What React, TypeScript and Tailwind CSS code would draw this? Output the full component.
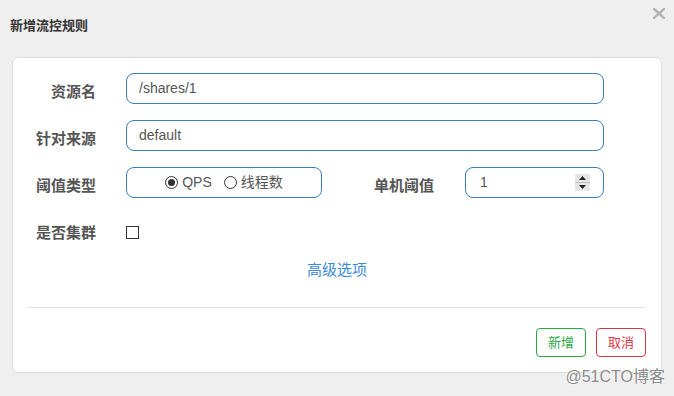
import React from 'react';

const font = { fontFamily: '"Liberation Sans", "Noto Sans CJK SC", sans-serif' };

function Label({ text, className = '' }: { text: string; className?: string }) {
  return (
    <div className={`h-[31px] w-[83px] shrink-0 text-right text-[15px] font-bold text-[#555] leading-[31px] ${className}`}>
      {text}
    </div>
  );
}

function Radio({ checked, label }: { checked: boolean; label: string }) {
  return (
    <label className="flex items-center gap-[4px]">
      <span className="flex h-[13px] w-[13px] items-center justify-center rounded-full border border-[#333] bg-white">
        {checked && <span className="h-[7px] w-[7px] rounded-full bg-[#333]" />}
      </span>
      <span className="text-[14px] text-[#555]">{label}</span>
    </label>
  );
}

function Spinner() {
  return (
    <div className="flex h-[17px] w-[15px] flex-col bg-[#e6e6e6]">
      <div className="flex flex-1 items-center justify-center border-b border-[#bbb]">
        <svg width="7" height="4" viewBox="0 0 7 4">
          <path d="M0 4 L3.5 0 L7 4 Z" fill="#222" />
        </svg>
      </div>
      <div className="flex flex-1 items-center justify-center">
        <svg width="7" height="4" viewBox="0 0 7 4">
          <path d="M0 0 L3.5 4 L7 0 Z" fill="#222" />
        </svg>
      </div>
    </div>
  );
}

export default function App() {
  return (
    <div className="relative h-[396px] w-[674px] overflow-hidden bg-[#efefef]" style={font}>
      {/* header */}
      <div className="h-[57px] pl-[10px] pt-[16px]">
        <h4 className="text-[13px] font-bold leading-[19px] text-[#333]">新增流控规则</h4>
      </div>
      <button className="absolute right-[9px] top-[8px]">
        <svg width="12" height="11" viewBox="0 0 12 11">
          <path d="M1 1 L11 10 M11 1 L1 10" stroke="#b3b3b3" strokeWidth="2.4" strokeLinecap="square" />
        </svg>
      </button>

      {/* card */}
      <div className="mx-3 h-[316px] rounded-[6px] border border-[#dcdcdc] bg-white pt-[15px]">
        <div className="flex flex-col gap-[16px]">
          <div className="flex items-center gap-[30px]">
            <Label text="资源名" className="pt-[3px]" />
            <div className="flex h-[31px] w-[478px] items-center rounded-[8px] border border-[#3a7dc0] px-[12px] text-[14px] text-[#555]">
              /shares/1
            </div>
          </div>
          <div className="flex items-center gap-[30px]">
            <Label text="针对来源" className="pt-[3px]" />
            <div className="flex h-[31px] w-[478px] items-center rounded-[8px] border border-[#3a7dc0] px-[12px] text-[14px] text-[#555]">
              default
            </div>
          </div>
          <div className="flex items-center">
            <Label text="阈值类型" className="pt-[3px]" />
            <div className="ml-[30px] flex h-[31px] w-[196px] items-center justify-center gap-[12px] rounded-[8px] border border-[#3a7dc0]">
              <Radio checked label="QPS" />
              <Radio checked={false} label="线程数" />
            </div>
            <Label text="单机阈值" className="ml-[29px] pt-[3px]" />
            <div className="ml-[31px] flex h-[31px] w-[139px] items-center justify-between rounded-[8px] border border-[#3a7dc0] pl-[14px] pr-[13px] text-[14px] text-[#555]">
              <span>1</span>
              <Spinner />
            </div>
          </div>
        </div>

        <div className="mt-[19px] flex h-[31px] items-center gap-[30px]">
          <Label text="是否集群" />
          <span className="h-[13px] w-[13px] border border-[#333] bg-white" />
        </div>

        <div className="mt-[12px] text-center leading-[20px]">
          <a className="text-[15px] leading-[20px] text-[#3a8ad6]">高级选项</a>
        </div>

        <div className="mx-[15px] mt-[27px] border-t border-[#e3e3e3]" />

        <div className="mt-[20px] flex justify-end gap-[10px] pr-[15px]">
          <button className="h-[29px] w-[50px] rounded-[4px] border border-[#28a745] bg-white text-[13px] text-[#28a745]">
            新增
          </button>
          <button className="h-[29px] w-[50px] rounded-[4px] border border-[#dc3545] bg-white text-[13px] text-[#dc3545]">
            取消
          </button>
        </div>
      </div>

      {/* watermark */}
      <div
        className="absolute right-[9px] top-[368px] text-[16px] leading-[18px] text-[#8a8a8a]"
        style={{ textShadow: '0 0 2px #fff, 0 0 2px #fff' }}
      >
        @51CTO博客
      </div>
    </div>
  );
}
